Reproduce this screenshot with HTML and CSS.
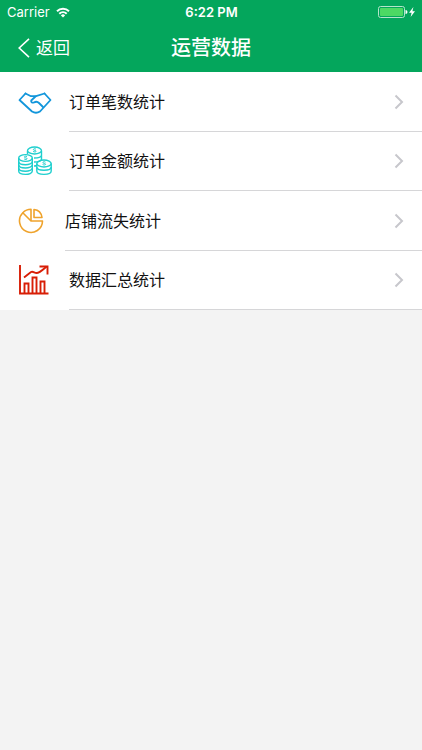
FILE: index.html
```html
<!DOCTYPE html>
<html lang="zh-CN">
<head>
  <meta charset="UTF-8" />
  <meta name="viewport" content="width=device-width, initial-scale=1.0"/>
  <title>运营数据</title>
  <link rel="stylesheet" href="styles.css">
</head>
<body>

  <header class="header">
    <!-- Status bar -->
    <div class="status">
      <div class="carrier">
        <span>Carrier</span>
        <svg width="14" height="11" viewBox="0 0 14 11" fill="none" stroke="#fff" stroke-width="2">
          <path d="M1 4.2a8.6 8.6 0 0 1 12 0"/>
          <path d="M3.3 6.7a5.3 5.3 0 0 1 7.4 0"/>
          <path d="M7 10.6L4.9 8.4a3 3 0 0 1 4.2 0z" fill="#fff" stroke="none"/>
        </svg>
      </div>
      <span class="time">6:22 PM</span>
      <div class="power">
        <svg width="38" height="12" viewBox="0 0 38 12">
          <rect x="0.5" y="0.5" width="26" height="11" rx="2" fill="none" stroke="#b5e5ca"/>
          <rect x="2" y="2" width="23" height="8" rx="1" fill="#4cd964"/>
          <path d="M27.5 4a2 2 0 0 1 0 4z" fill="#fff"/>
          <path d="M35.4 1L31 6.8h2.6L32.6 11 37 5.2h-2.6z" fill="#fff"/>
        </svg>
      </div>
    </div>

    <!-- Navigation bar -->
    <nav class="nav">
      <button class="back" type="button">
        <svg width="12" height="20" viewBox="0 0 12 20" fill="none" stroke="#fff" stroke-width="1.6">
          <path d="M11 0.8L1.2 10 11 19.2"/>
        </svg>
        <span>返回</span>
      </button>
      <h1>运营数据</h1>
    </nav>
  </header>

  <main class="list">
    <a class="row" href="#orders">
      <svg class="icon" width="34" height="30" viewBox="0 0 34 30" fill="none" stroke="#1296db" stroke-width="1.8" stroke-linejoin="round" stroke-linecap="round">
        <path d="M7.5 6.5L1.5 13 14 24.500q4 2.500 8 0L32.500 13l-6-6.500"/>
        <path d="M7.5 6.5L13 9.200h5l8.500-2.700"/>
        <path d="M17.500 9.500L13.200 13.500c-.5 2 1.300 2.500 2.800 2 2-1.200 3.500-1 5 .5l4 4"/>
      </svg>
      <span class="label">订单笔数统计</span>
      <svg class="arrow" width="10" height="16" viewBox="0 0 10 16"><path d="M1.5 1.5L8 8l-6.5 6.5"/></svg>
    </a>

    <a class="row" href="#amount">
      <svg class="icon" width="34" height="30" viewBox="0 0 34 30" fill="none" stroke="#1fcfce" stroke-width="1.4">
        <path d="M9.5 8V5M23.5 5v9M16 12c4.500 0 7.500-1 7.500-3M16 16c4.500 0 7.500-1 7.500-3M16 20q2 0 3-.5"/>
        <ellipse cx="16.5" cy="4.5" rx="7" ry="3.5"/>
        <ellipse cx="7.5" cy="12" rx="6.8" ry="3.4"/>
        <path d="M.7 12v13c0 4.5 13.600 4.500 13.600 0V12"/>
        <path d="M.7 15.5c0 4.3 13.600 4.300 13.600 0M.7 18.700c0 4.300 13.600 4.300 13.600 0M.7 22c0 4.300 13.600 4.300 13.600 0"/>
        <ellipse cx="26" cy="17.5" rx="7.2" ry="3.5"/>
        <path d="M18.800 17.500v7.500c0 4.500 14.400 4.500 14.400 0v-7.500"/>
        <path d="M18.800 21c0 4.300 14.400 4.300 14.400 0"/>
        <g stroke-width="1">
          <path d="M18 3.200c-1.500-1-3-.3-2.500.6.5.8 2.500.4 2.600 1.400.1 1-2 1-3 .2"/>
          <path d="M9 10.700c-1.500-1-3-.3-2.500.6.5.8 2.500.4 2.600 1.400.1 1-2 1-3 .2"/>
          <path d="M27.500 16.200c-1.500-1-3-.3-2.500.6.5.8 2.500.4 2.600 1.400.1 1-2 1-3 .2"/>
        </g>
      </svg>
      <span class="label">订单金额统计</span>
      <svg class="arrow" width="10" height="16" viewBox="0 0 10 16"><path d="M1.5 1.5L8 8l-6.5 6.5"/></svg>
    </a>

    <a class="row" href="#churn">
      <svg class="icon small" width="26" height="26" viewBox="0 0 26 26" fill="none" stroke="#efa32c" stroke-width="1.6" stroke-linejoin="round">
        <path d="M4.800 4.800A11.500 11.500 0 1 0 24.500 13H13z"/>
        <path d="M4.800 4.800A11.500 11.500 0 0 1 13 1.300V13"/>
        <path d="M16 1.500v8h8c-.6-4.500-3.600-7.500-8-8z"/>
      </svg>
      <span class="label">店铺流失统计</span>
      <svg class="arrow" width="10" height="16" viewBox="0 0 10 16"><path d="M1.5 1.5L8 8l-6.5 6.5"/></svg>
    </a>

    <a class="row" href="#summary">
      <svg class="icon" width="34" height="30" viewBox="0 0 34 30" fill="none" stroke="#d81e06" stroke-width="1.9">
        <path d="M2 0v28.500h28.500"/>
        <path d="M6.500 28V18.500h4V28M14.500 28V12.500h4V28M22.500 28V16.500h4V28"/>
        <path d="M6 12.500l7-5.500c2-1 3.500 1 5.500 1 3 0 6-3 10-6.500"/>
        <path d="M21.500 1.500h8v8"/>
      </svg>
      <span class="label">数据汇总统计</span>
      <svg class="arrow" width="10" height="16" viewBox="0 0 10 16"><path d="M1.5 1.5L8 8l-6.5 6.5"/></svg>
    </a>
  </main>

</body>
</html>
```

FILE: styles.css
```css
* {
  margin: 0;
  padding: 0;
  box-sizing: border-box;
}

body {
  font-family: 'Inter', 'Noto Sans CJK SC', sans-serif;
  background: #f3f3f3;
  color: #111;
}

.header {
  background: #04a65c;
  color: white;
}

.status {
  display: grid;
  grid-template-columns: 1fr auto 1fr;
  align-items: center;
  height: 24px;
  padding: 0 6px 0 7px;
  font-size: 13px;
}

.carrier {
  display: flex;
  align-items: center;
  gap: 6px;
}

.time {
  font-weight: 600;
}

.power {
  display: flex;
  justify-content: flex-end;
}

.nav {
  display: grid;
  grid-template-columns: 1fr auto 1fr;
  align-items: center;
  height: 48px;
  padding: 0 18px;
}

.back {
  display: flex;
  align-items: center;
  justify-self: start;
  gap: 6px;
  background: none;
  border: none;
  color: white;
  font-family: inherit;
  font-size: 17px;
  line-height: 24px;
  cursor: pointer;
}

h1 {
  font-size: 20px;
  font-weight: 500;
  line-height: 28px;
}

.list {
  background: white;
}

.row {
  display: grid;
  grid-template-columns: auto 1fr auto;
  grid-template-rows: 1fr 1px;
  column-gap: 17px;
  align-items: center;
  height: 60px;
  padding-left: 18px;
  color: inherit;
  font-size: 16px;
  line-height: 24px;
  text-decoration: none;
}

.row:nth-child(even) {
  height: 59px;
}

/* separator starts where the label starts */
.row::after {
  content: "";
  grid-column: 2 / 4;
  height: 1px;
  background: #d6d6d8;
}

.icon {
  display: block;
}

.small {
  margin-right: 4px;
}

.arrow {
  margin-right: 18px;
  fill: none;
  stroke: #c7c7cc;
  stroke-width: 2;
}
```
